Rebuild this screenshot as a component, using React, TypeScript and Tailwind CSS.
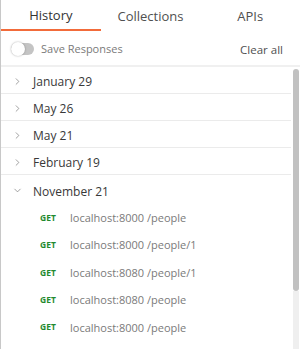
import { ChevronRight, ChevronDown } from "lucide-react";

const dates = ["January 29", "May 26", "May 21", "February 19"];

const requests = [
  "localhost:8000 /people",
  "localhost:8000 /people/1",
  "localhost:8080 /people/1",
  "localhost:8080 /people",
  "localhost:8000 /people",
  "localhost:8000 /people",
];

export default function App() {
  return (
    <div
      className="w-[300px] h-[349px] overflow-hidden bg-white border-l border-[#c8c8c8] flex flex-col"
      style={{ fontFamily: '"Open Sans", sans-serif' }}
    >
      {/* Tabs */}
      <div className="flex h-[31px] shrink-0">
        <div className="w-[100px] flex items-center justify-center border-b-2 border-[#f26b3a] text-[13px] text-[#333] pt-[2px]">
          History
        </div>
        <div className="w-[100px] flex items-center justify-center text-[13px] text-[#505050] pt-[2px]">
          Collections
        </div>
        <div className="w-[100px] flex items-center justify-center text-[13px] text-[#505050] pt-[2px]">
          APIs
        </div>
      </div>

      {/* Toolbar */}
      <div className="flex items-center justify-between h-[36px] shrink-0 pl-[10px] pr-[17px] pt-[2px] border-b-2 border-[#f0f0f0]">
        <div className="flex items-center gap-[7px]">
          <div className="w-[23px] h-[12px] rounded-full bg-[#c4c4c4] relative">
            <div className="absolute left-0 top-[-1px] w-[14px] h-[14px] rounded-full bg-white shadow-[0_0_2px_rgba(0,0,0,0.35)]" />
          </div>
          <span className="text-[11px] text-[#7a7a7a] pt-[1px]">Save Responses</span>
        </div>
        <span className="text-[11.5px] text-[#505050] pt-[1px]">Clear all</span>
      </div>

      {/* List */}
      <div className="flex flex-1 min-h-0">
        <div className="w-[291px] flex flex-col">
          {dates.map((d) => (
            <div
              key={d}
              className="h-[27px] shrink-0 flex items-center border-b border-[#ebebeb] text-[12px] text-[#383838] pt-[4px]"
            >
              <ChevronRight className="w-[11px] h-[11px] ml-[11px] mr-[10px] text-[#777] -mt-[2px]" strokeWidth={1.5} />
              <span>{d}</span>
            </div>
          ))}
          <div className="h-[28px] shrink-0 flex items-center text-[12px] text-[#383838] pt-[5px]">
            <ChevronDown className="w-[11px] h-[11px] ml-[11px] mr-[10px] text-[#777] -mt-[2px]" strokeWidth={1.5} />
            <span>November 21</span>
          </div>
          {requests.map((r, i) => (
            <div key={i} className="h-[27.4px] shrink-0 flex items-center pt-[3px]">
              <span className="w-[30px] ml-[39px] text-[8.5px] font-bold text-[#1f8a2e]">GET</span>
              <span className="text-[11px] text-[#7a7a7a]">{r}</span>
            </div>
          ))}
        </div>
        <div className="w-[9px] flex flex-col pl-[2px] pr-[1px] pt-[2px]">
          <div className="h-[222px] rounded-full bg-[#c1c1c1] shrink-0" />
          <div className="flex-1 bg-[#efefef]" />
        </div>
      </div>
    </div>
  );
}
